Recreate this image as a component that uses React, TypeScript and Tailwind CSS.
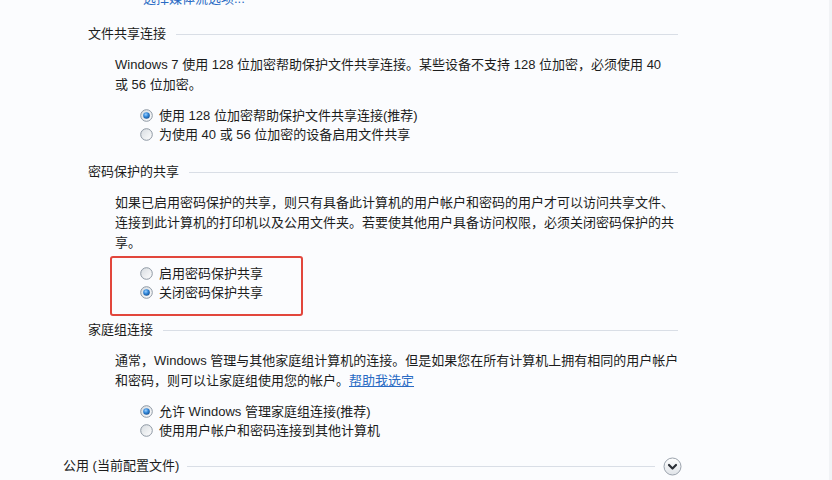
import React from 'react'

const font = "font-['Liberation_Sans','Noto_Sans_CJK_SC',sans-serif]"

function Radio({ checked }: { checked?: boolean }) {
  return (
    <svg width="13" height="13" viewBox="0 0 13 13" className="shrink-0">
      <defs>
        <linearGradient id="radioBg" x1="0" y1="0" x2="1" y2="1">
          <stop offset="0" stopColor="#d6dbe0" />
          <stop offset="1" stopColor="#ffffff" />
        </linearGradient>
        <radialGradient id="radioDot" cx="0.4" cy="0.35" r="0.7">
          <stop offset="0" stopColor="#9fd0ff" />
          <stop offset="0.5" stopColor="#2f86d8" />
          <stop offset="1" stopColor="#1a4f8f" />
        </radialGradient>
      </defs>
      <circle cx="6.5" cy="6.5" r="5.8" fill="url(#radioBg)" stroke="#8d97a3" strokeWidth="1" />
      {checked && <circle cx="6.5" cy="6.5" r="3.3" fill="url(#radioDot)" />}
    </svg>
  )
}

function Option({ label, checked }: { label: React.ReactNode; checked?: boolean }) {
  return (
    <div className="flex h-[19px] items-center gap-[6px] whitespace-nowrap leading-[19px]">
      <Radio checked={checked} />
      <span>{label}</span>
    </div>
  )
}

function SectionTitle({ title, className }: { title: string; className: string }) {
  return (
    <div className={`flex h-5 items-center pl-[88px] pr-[151px] ${className}`}>
      <span className="whitespace-nowrap">{title}</span>
      <div className="ml-[10px] h-px flex-1 bg-[#d9dee6]" />
    </div>
  )
}

export default function App() {
  return (
    <div
      className={`flex h-[480px] w-[832px] flex-col overflow-hidden border-r-[3px] border-r-[#f1f3f6] bg-[#fbfcfe] text-[13px] leading-5 text-[#1c1c1c] ${font}`}
    >
      <div className="-mt-[11px] h-5 pl-[143px] text-[#2a6bc4]">选择媒体流选项...</div>

      <SectionTitle title="文件共享连接" className="mt-[15px]" />
      <div className="mt-[11px] whitespace-nowrap pl-[115px]">
        <div>Windows 7 使用 128 位加密帮助保护文件共享连接。某些设备不支持 128 位加密，必须使用 40</div>
        <div>或 56 位加密。</div>
      </div>
      <div className="mt-[11px] pl-[140px]">
        <Option checked label="使用 128 位加密帮助保护文件共享连接(推荐)" />
        <Option label="为使用 40 或 56 位加密的设备启用文件共享" />
      </div>

      <SectionTitle title="密码保护的共享" className="mt-[18px]" />
      <div className="mt-[11px] whitespace-nowrap pl-[115px]">
        <div>如果已启用密码保护的共享，则只有具备此计算机的用户帐户和密码的用户才可以访问共享文件、</div>
        <div>连接到此计算机的打印机以及公用文件夹。若要使其他用户具备访问权限，必须关闭密码保护的共</div>
        <div>享。</div>
      </div>
      <div className="ml-[110px] mt-[3px] h-[60px] w-[193px] rounded-[3px] border-2 border-[#e2463c] pl-[28px] pt-[6px]">
        <Option label="启用密码保护共享" />
        <Option checked label="关闭密码保护共享" />
      </div>

      <SectionTitle title="家庭组连接" className="mt-[4px]" />
      <div className="mt-[11px] whitespace-nowrap pl-[115px]">
        <div>通常，Windows 管理与其他家庭组计算机的连接。但是如果您在所有计算机上拥有相同的用户帐户</div>
        <div>
          和密码，则可以让家庭组使用您的帐户。
          <span className="text-[#2a6bc4] underline">帮助我选定</span>
        </div>
      </div>
      <div className="mt-[11px] pl-[140px]">
        <Option checked label="允许 Windows 管理家庭组连接(推荐)" />
        <Option label="使用用户帐户和密码连接到其他计算机" />
      </div>

      <div className="mt-[16px] flex h-5 items-center pl-[63px] pr-[147px]">
        <span className="whitespace-nowrap">公用 (当前配置文件)</span>
        <div className="ml-[8px] h-px flex-1 bg-[#d9dee6]" />
        <svg width="19" height="19" viewBox="0 0 19 19" className="ml-[8px] shrink-0">
          <defs>
            <linearGradient id="chevBg" x1="0" y1="0" x2="0" y2="1">
              <stop offset="0" stopColor="#ffffff" />
              <stop offset="1" stopColor="#dfe3e8" />
            </linearGradient>
          </defs>
          <circle cx="9.5" cy="9.5" r="8.5" fill="url(#chevBg)" stroke="#9aa2ac" />
          <path d="M6 8 L9.5 11.5 L13 8" fill="none" stroke="#2b2f36" strokeWidth="2.2" strokeLinecap="round" strokeLinejoin="round" />
        </svg>
      </div>
    </div>
  )
}
